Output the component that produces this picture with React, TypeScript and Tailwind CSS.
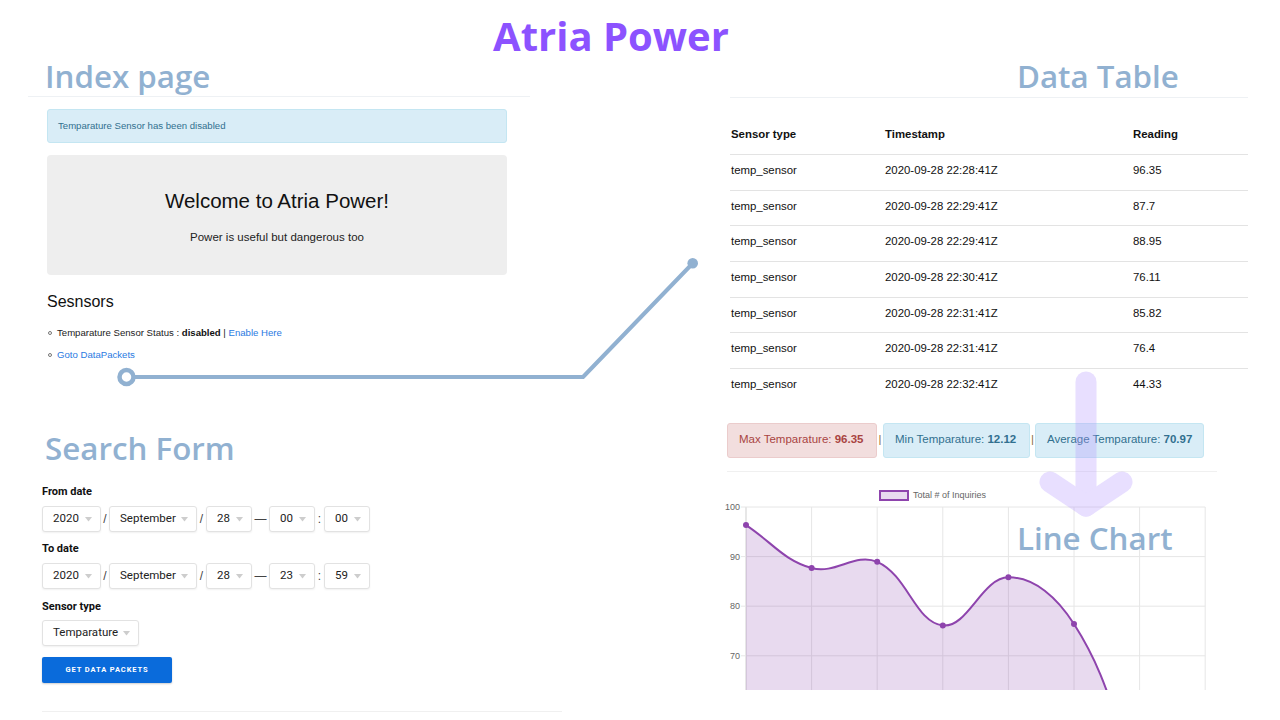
import React from "react";

const HEAD = "font-['Open_Sans',sans-serif] font-semibold text-[31.3px] leading-[36px] text-[#91b1d1]";
const ARIAL = "font-['Liberation_Sans',Arial,sans-serif]";
const ROBOTO = "font-['Roboto','Liberation_Sans',sans-serif]";

function Caret() {
  return (
    <svg width="7" height="5" viewBox="0 0 7 5" className="shrink-0">
      <path d="M0 0 L7 0 L3.5 4.5 Z" fill="#cdcdcd" />
    </svg>
  );
}

function Sel({ className, children }: { className: string; children: React.ReactNode }) {
  return (
    <div
      className={`flex items-center justify-between h-[26px] bg-white border border-[#e2e2e2] rounded-[3px] shadow-[0_1px_2px_rgba(0,0,0,0.06)] pl-[10px] pr-[8px] text-[11.5px] text-[#222] ${className}`}
    >
      <span>{children}</span>
      <Caret />
    </div>
  );
}

function Sep({ className, children }: { className: string; children: React.ReactNode }) {
  return <span className={`text-center text-[12px] text-[#444] font-['Liberation_Sans',Arial,sans-serif] ${className}`}>{children}</span>;
}

function DateRow({ h, m }: { h: string; m: string }) {
  return (
    <div className={`flex items-center ml-[42px] ${ROBOTO}`}>
      <Sel className="w-[59px]">2020</Sel>
      <Sep className="w-[8px]">/</Sep>
      <Sel className="w-[88px]">September</Sel>
      <Sep className="w-[9px]">/</Sep>
      <Sel className="w-[46px]">28</Sel>
      <Sep className="w-[17px]">—</Sep>
      <Sel className="w-[46px]">{h}</Sel>
      <Sep className="w-[9px]">:</Sep>
      <Sel className="w-[46px]">{m}</Sel>
    </div>
  );
}

const rows = [
  ["2020-09-28 22:28:41Z", "96.35"],
  ["2020-09-28 22:29:41Z", "87.7"],
  ["2020-09-28 22:29:41Z", "88.95"],
  ["2020-09-28 22:30:41Z", "76.11"],
  ["2020-09-28 22:31:41Z", "85.82"],
  ["2020-09-28 22:31:41Z", "76.4"],
  ["2020-09-28 22:32:41Z", "44.33"],
];

const OX = 716;
const OY = 472;
const vals = [96.35, 87.7, 88.95, 76.11, 85.82, 76.4, 44.33];
const pts = vals.map((v, i) => ({ x: 746 + i * 65.6 - OX, y: 507 + (100 - v) * 4.96 - OY }));

function ctrl(i: number) {
  const prev = pts[Math.max(0, i - 1)];
  const cur = pts[i];
  const next = pts[Math.min(pts.length - 1, i + 1)];
  const d01 = Math.hypot(cur.x - prev.x, cur.y - prev.y);
  const d12 = Math.hypot(next.x - cur.x, next.y - cur.y);
  let s01 = d01 / (d01 + d12);
  let s12 = d12 / (d01 + d12);
  if (isNaN(s01)) s01 = 0;
  if (isNaN(s12)) s12 = 0;
  const fa = 0.4 * s01;
  const fb = 0.4 * s12;
  return {
    p: { x: cur.x - fa * (next.x - prev.x), y: cur.y - fa * (next.y - prev.y) },
    n: { x: cur.x + fb * (next.x - prev.x), y: cur.y + fb * (next.y - prev.y) },
  };
}

let linePath = `M${pts[0].x} ${pts[0].y}`;
for (let i = 0; i < pts.length - 1; i++) {
  const a = ctrl(i);
  const b = ctrl(i + 1);
  linePath += ` C${a.n.x} ${a.n.y} ${b.p.x} ${b.p.y} ${pts[i + 1].x} ${pts[i + 1].y}`;
}
const fillPath = `${linePath} L${pts[pts.length - 1].x} 400 L${pts[0].x} 400 Z`;

function Chart() {
  const xs = [0, 1, 2, 3, 4, 5, 6, 7].map((i) => 746 + i * 65.6 - OX);
  const ys = [100, 90, 80, 70, 60].map((v) => ({ v, y: 507 + (100 - v) * 4.96 - OY }));
  return (
    <svg width="511" height="218" viewBox="0 0 511 218" className="block">
      {xs.map((x, i) => (
        <line key={i} x1={x} y1={507 - OY} x2={x} y2={218} stroke={i === 0 ? "#cfcfcf" : "#e6e6e6"} strokeWidth="1" />
      ))}
      {ys.map((g, i) => (
        <line key={i} x1={741 - OX} y1={g.y} x2={xs[7]} y2={g.y} stroke="#e6e6e6" strokeWidth="1" />
      ))}
      {ys.slice(0, 4).map((g) => (
        <text
          key={g.v}
          x={740 - OX}
          y={g.y + 3}
          textAnchor="end"
          fontSize="9"
          fill="#666"
          fontFamily="Liberation Sans, Arial, sans-serif"
        >
          {g.v}
        </text>
      ))}
      <rect x={880 - OX} y={491 - OY} width="28" height="9" fill="rgba(142,68,173,0.2)" stroke="#8e44ad" strokeWidth="2" />
      <text x={913 - OX} y={498 - OY} fontSize="9" fill="#666" fontFamily="Liberation Sans, Arial, sans-serif">
        Total # of Inquiries
      </text>
      <path d={fillPath} fill="rgba(142,68,173,0.2)" />
      <path d={linePath} fill="none" stroke="#8e44ad" strokeWidth="2" />
      {pts.map((p, i) => (
        <circle key={i} cx={p.x} cy={p.y} r="3" fill="#8e44ad" />
      ))}
    </svg>
  );
}

export default function App() {
  return (
    <div className="relative w-[1280px] h-[720px] overflow-hidden bg-white">
      {/* Title */}
      <div className="flex justify-center pr-[58px] pt-[13px] h-[58px]">
        <h1 className="font-['Open_Sans',sans-serif] font-bold text-[40px] leading-[45px] text-[#8c52ff]">Atria Power</h1>
      </div>

      <div className="flex">
        {/* Left column */}
        <div className="w-[640px] flex flex-col">
          <h2 className={`${HEAD} ml-[45px]`}>Index page</h2>
          <div className="mt-[2px] ml-[28px] w-[502px] h-px bg-[#eef1f4]" />
          <div
            className={`mt-[12px] ml-[47px] w-[460px] h-[34px] flex items-center px-[10px] bg-[#d9edf7] border border-[#c4e6f2] rounded-[3px] text-[9.6px] text-[#31708f] ${ARIAL}`}
          >
            Temparature Sensor has been disabled
          </div>
          <div className={`mt-[12px] ml-[47px] w-[460px] h-[120px] bg-[#eeeeee] rounded-[4px] flex flex-col items-center pt-[33px] ${ARIAL}`}>
            <div className="text-[20.5px] leading-[26px] text-[#111]">Welcome to Atria Power!</div>
            <div className="mt-[16px] text-[11.5px] leading-[14px] text-[#222]">Power is useful but dangerous too</div>
          </div>
          <div className={`mt-[17px] ml-[47px] text-[16px] leading-[20px] text-[#111] ${ARIAL}`}>Sesnsors</div>
          <ul className={`mt-[14px] ml-[47px] flex flex-col gap-[8px] text-[9.6px] leading-[14px] text-[#222] ${ARIAL}`}>
            <li className="flex items-center">
              <span className="w-[4px] h-[4px] rounded-full border border-[#777] ml-[1px] mr-[5px]" />
              <span>
                Temparature Sensor Status : <b className="text-[#111]">disabled</b> | <span className="text-[#2a7ae2]">Enable Here</span>
              </span>
            </li>
            <li className="flex items-center">
              <span className="w-[4px] h-[4px] rounded-full border border-[#777] ml-[1px] mr-[5px]" />
              <span className="text-[#2a7ae2]">Goto DataPackets</span>
            </li>
          </ul>

          <h2 className={`${HEAD} ml-[45px] mt-[68px]`}>Search Form</h2>
          <div className={`mt-[19px] ml-[42px] text-[11px] leading-[14px] font-bold text-[#111] ${ROBOTO}`}>From date</div>
          <div className="mt-[7px]">
            <DateRow h="00" m="00" />
          </div>
          <div className={`mt-[10px] ml-[42px] text-[11px] leading-[14px] font-bold text-[#111] ${ROBOTO}`}>To date</div>
          <div className="mt-[7px]">
            <DateRow h="23" m="59" />
          </div>
          <div className={`mt-[11px] ml-[42px] text-[11px] leading-[14px] font-bold text-[#111] ${ROBOTO}`}>Sensor type</div>
          <div className={`mt-[6px] ml-[42px] ${ROBOTO}`}>
            <Sel className="w-[97px]">Temparature</Sel>
          </div>
          <button
            className={`mt-[11px] ml-[42px] w-[130px] h-[26px] rounded-[2px] bg-[#0a6bdb] text-white text-[7.5px] font-bold tracking-[0.9px] shadow-[0_1px_2px_rgba(0,0,0,0.2)] ${ROBOTO}`}
          >
            GET DATA PACKETS
          </button>
          <div className="mt-[28px] ml-[42px] w-[520px] h-px bg-[#f0f0f0]" />
        </div>

        {/* Right column */}
        <div className="flex-1 flex flex-col">
          <h2 className={`${HEAD} ml-[377px]`}>Data Table</h2>
          <div className="mt-[3px] ml-[90px] w-[518px] h-px bg-[#eef1f4]" />
          <div className={`ml-[90px] w-[518px] text-[11.4px] text-[#111] ${ARIAL}`}>
            <div className="grid grid-cols-[154px_248px_1fr] pl-[1px] pt-[29px] pb-[13px] leading-[14px] font-bold">
              <span>Sensor type</span>
              <span>Timestamp</span>
              <span>Reading</span>
            </div>
            {rows.map((r, i) => (
              <div key={i} className="grid grid-cols-[154px_248px_1fr] pl-[1px] h-[35.67px] border-t border-[#e3e3e3] pt-[8px] leading-[14px]">
                <span>temp_sensor</span>
                <span>{r[0]}</span>
                <span>{r[1]}</span>
              </div>
            ))}
          </div>

          <div className={`mt-[19px] ml-[87px] flex items-center text-[11.5px] whitespace-nowrap ${ARIAL}`}>
            <div className="w-[150px] h-[35px] flex items-center px-[11px] rounded-[3px] bg-[#f2dede] border border-[#ebcccc] text-[#a94442]">
              <span>
                Max Temparature: <b>96.35</b>
              </span>
            </div>
            <span className="w-[6px] text-center text-[#8a6d3b]">|</span>
            <div className="w-[147px] h-[35px] flex items-center px-[11px] rounded-[3px] bg-[#d9edf7] border border-[#c4e6f2] text-[#31708f]">
              <span>
                Min Temparature: <b>12.12</b>
              </span>
            </div>
            <span className="w-[5px] text-center text-[#8a6d3b]">|</span>
            <div className="w-[169px] h-[35px] flex items-center px-[11px] rounded-[3px] bg-[#d9edf7] border border-[#c4e6f2] text-[#31708f]">
              <span>
                Average Temparature: <b>70.97</b>
              </span>
            </div>
          </div>
          <div className="mt-[13px] ml-[87px] w-[490px] h-px bg-[#f0f0f0]" />
          <div className="ml-[76px]">
            <Chart />
          </div>
        </div>
      </div>

      {/* Overlays */}
      <svg className="absolute inset-0 pointer-events-none" width="1280" height="720" viewBox="0 0 1280 720">
        <path d="M133 377 L583 377 L693 263" fill="none" stroke="#91b1d1" strokeWidth="4" strokeLinejoin="round" />
        <circle cx="126.5" cy="377" r="7" fill="#fff" stroke="#91b1d1" strokeWidth="4.5" />
        <circle cx="692.7" cy="263.3" r="5.3" fill="#91b1d1" />
        <g opacity="0.3" stroke="#b496ff" strokeWidth="21" strokeLinecap="round" strokeLinejoin="round" fill="none">
          <path d="M1086 382 L1086 506" />
          <path d="M1050 482 L1086 506 L1122 482" />
        </g>
      </svg>
      <div className={`absolute left-[1017px] top-[520px] ${HEAD}`}>Line Chart</div>
    </div>
  );
}
